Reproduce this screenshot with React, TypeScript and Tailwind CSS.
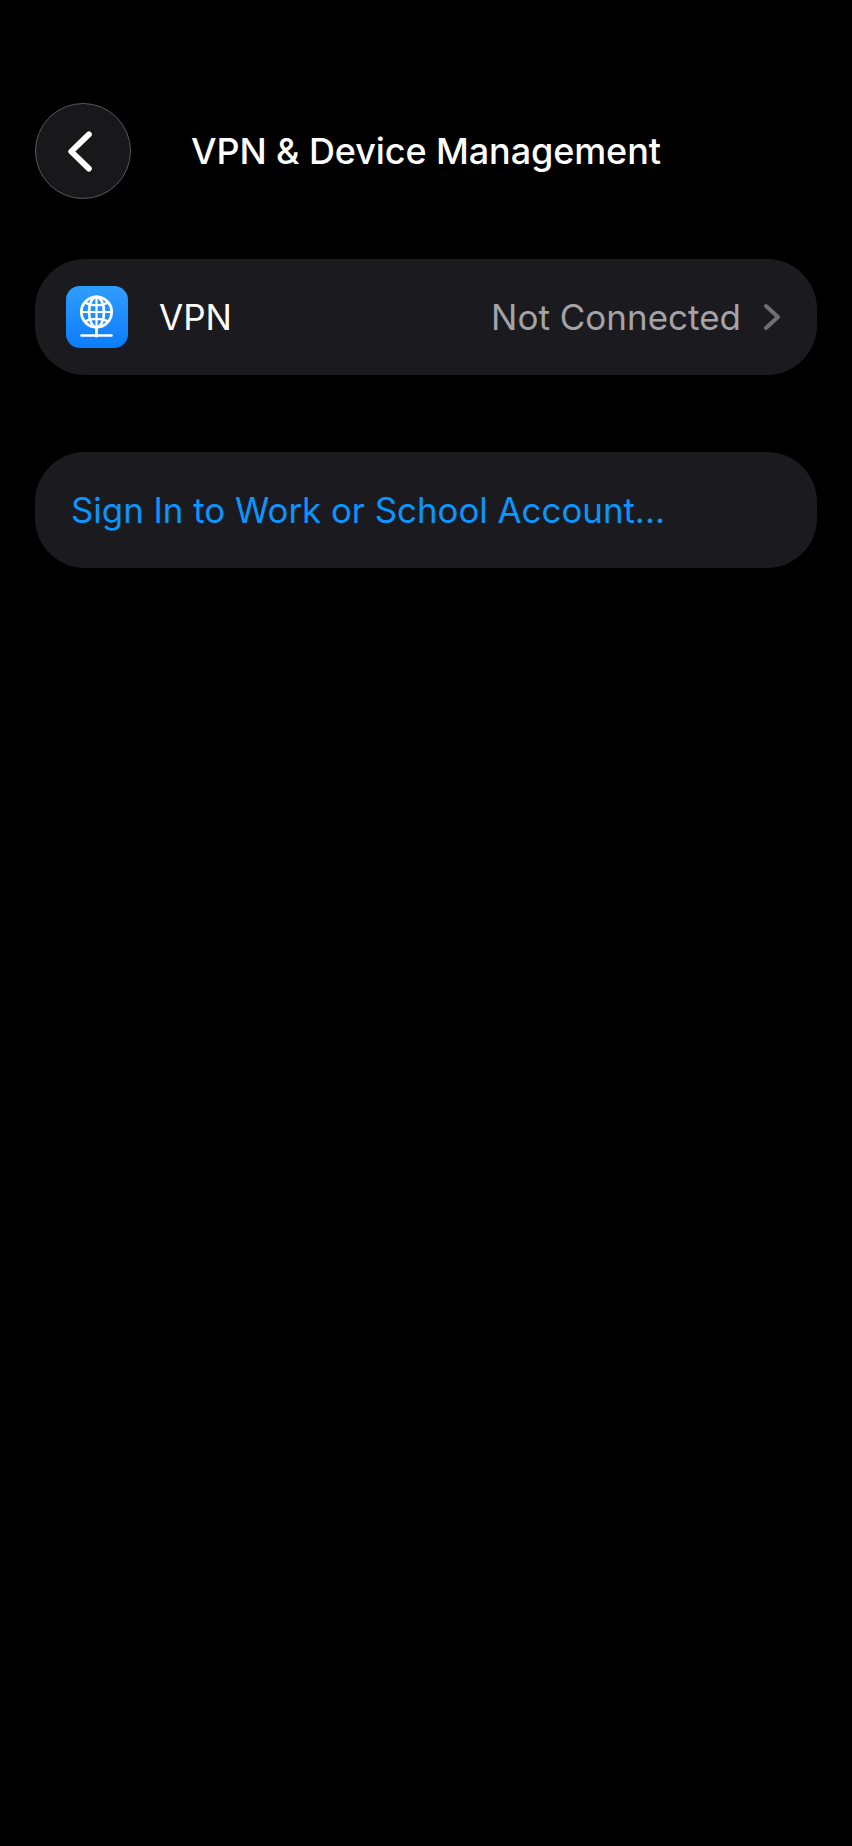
const font = { fontFamily: '"Inter", "Liberation Sans", sans-serif' };

function VpnIcon() {
  return (
    <div className="w-[62px] h-[62px] shrink-0 rounded-[14px] bg-gradient-to-b from-[#2f9dff] to-[#0b7cfb] flex items-center justify-center">
      <svg width="62" height="62" viewBox="0 0 62 62" fill="none" stroke="#fff" strokeWidth="2.7" strokeLinecap="round">
        <circle cx="30.5" cy="26" r="15.2" />
        <ellipse cx="30.5" cy="26" rx="7.5" ry="15.2" />
        <path d="M30.5 11v30M19 16.5c6 3.6 17 3.6 23 0M19 35.5c6-3.6 17-3.6 23 0M15.5 26h30" strokeWidth="2.2" />
        <path d="M30.5 41v8M15.5 49.5h30" />
        <circle cx="30.5" cy="49.5" r="2" fill="#fff" stroke="none" />
      </svg>
    </div>
  );
}

export default function App() {
  return (
    <div className="w-[852px] h-[1846px] bg-black text-white overflow-hidden" style={font}>
      <header className="pt-[103px] pl-[35px] flex items-center">
        <button className="w-[96px] h-[96px] rounded-full bg-[#18181a] border border-[#58585a] flex items-center justify-center">
          <svg width="96" height="96" viewBox="0 0 96 96" fill="none" stroke="#fff" strokeWidth="6" strokeLinecap="round" strokeLinejoin="round">
            <path d="M54 31 L36 48.5 L54 66" />
          </svg>
        </button>
        <h1 className="ml-[60px] text-[36px] font-medium leading-[44px] tracking-[-0.1px]">VPN &amp; Device Management</h1>
      </header>

      <div className="mt-[60px] mx-[35px] h-[116px] rounded-[50px] bg-[#1b1b1f] flex items-center pl-[31px] pr-[36px]">
        <VpnIcon />
        <span className="ml-[31px] text-[35px] leading-[42px]">VPN</span>
        <span className="ml-auto text-[35px] leading-[42px] text-[#a3a3a8]">Not Connected</span>
        <svg className="ml-[22px]" width="18" height="28" viewBox="0 0 18 28" fill="none" stroke="#6f6f74" strokeWidth="4" strokeLinecap="round" strokeLinejoin="round">
          <path d="M3 3 L15 14 L3 25" />
        </svg>
      </div>

      <div className="mt-[77px] mx-[35px] h-[116px] rounded-[50px] bg-[#1b1b1f] flex items-center pl-[36px]">
        <span className="text-[34.85px] leading-[42px] text-[#0a95ff]">Sign In to Work or School Account...</span>
      </div>
    </div>
  );
}
